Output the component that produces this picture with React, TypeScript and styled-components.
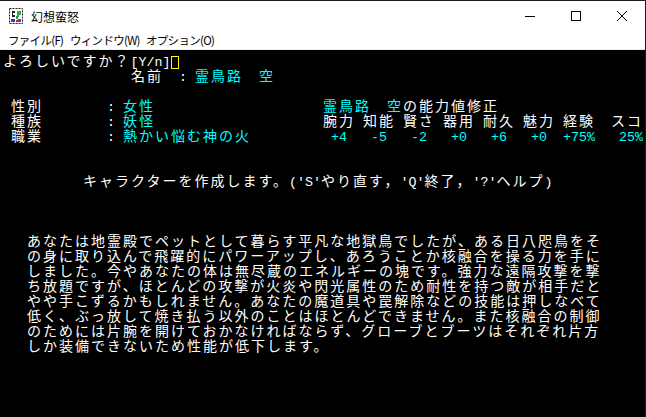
import React from "react";
import styled, { createGlobalStyle } from "styled-components";

const GlobalStyle = createGlobalStyle`
  html, body {
    margin: 0;
    padding: 0;
    background: #000;
  }
  #root {
    width: 646px;
    height: 417px;
  }
`;

const CYAN = "#00ffff";
const WHITE = "#ffffff";

const Window = styled.div`
  width: 646px;
  height: 417px;
  box-sizing: border-box;
  border-top: 1px solid #1b1b1b;
  border-right: 1px solid #1b1b1b;
  background: #fff;
  display: flex;
  flex-direction: column;
  overflow: hidden;
`;

const TitleBar = styled.div`
  height: 30px;
  flex-shrink: 0;
  display: flex;
  align-items: center;
`;

const AppIcon = styled.svg`
  width: 16px;
  height: 16px;
  margin: 0 7px 0 8px;
  flex-shrink: 0;
`;

const Title = styled.span`
  flex: 1;
  font-family: "Noto Sans CJK JP", sans-serif;
  font-size: 12px;
  color: #000;
`;

const CaptionButton = styled.div`
  width: 46px;
  height: 30px;
  display: flex;
  align-items: center;
  justify-content: center;
`;

const MenuBar = styled.div`
  height: 18px;
  flex-shrink: 0;
  display: flex;
  align-items: center;
  padding-left: 8px;
  border-bottom: 1px solid #ececec;
`;

const MenuItem = styled.span<{ $w?: number }>`
  width: ${(p) => (p.$w ? `${p.$w}px` : "auto")};
  font-family: "Noto Sans CJK JP", sans-serif;
  font-size: 11.5px;
  letter-spacing: -0.7px;
  color: #000;
  white-space: nowrap;
`;

const Terminal = styled.div`
  flex: 1;
  background: #000;
  padding: 3px 0 0 3px;
  overflow: hidden;
`;

const Row = styled.div`
  height: 15px;
  line-height: 15px;
  white-space: pre;
`;

const Wide = styled.span<{ $c: string }>`
  font-family: "Noto Sans CJK JP", sans-serif;
  font-size: 14px;
  letter-spacing: 2px;
  color: ${(p) => p.$c};
`;

const Half = styled.span<{ $c: string }>`
  font-family: "Liberation Mono", monospace;
  font-size: 13.3333px;
  letter-spacing: 0;
  color: ${(p) => p.$c};
`;

const Cursor = styled.span`
  display: inline-block;
  width: 8px;
  height: 13px;
  box-sizing: border-box;
  border: 1px solid #ffff00;
  vertical-align: -3px;
`;

type Seg = [string, string?];

// split a string into half-width (ascii) and full-width runs
function runs(text: string) {
  const out: { t: string; half: boolean }[] = [];
  for (const ch of text) {
    const half = ch.charCodeAt(0) < 0x100;
    const last = out[out.length - 1];
    if (last && last.half === half) last.t += ch;
    else out.push({ t: ch, half });
  }
  return out;
}

function Line({ segs, cursor }: { segs: Seg[]; cursor?: boolean }) {
  return (
    <Row>
      {segs.map(([text, color = WHITE], i) =>
        runs(text).map((r, j) =>
          r.half ? (
            <Half key={`${i}-${j}`} $c={color}>
              {r.t}
            </Half>
          ) : (
            <Wide key={`${i}-${j}`} $c={color}>
              {r.t}
            </Wide>
          )
        )
      )}
      {cursor && <Cursor />}
    </Row>
  );
}

const pad = (n: number) => " ".repeat(n);

const story = [
  "あなたは地霊殿でペットとして暮らす平凡な地獄鳥でしたが、ある日八咫鳥をそ",
  "の身に取り込んで飛躍的にパワーアップし、あろうことか核融合を操る力を手に",
  "しました。今やあなたの体は無尽蔵のエネルギーの塊です。強力な遠隔攻撃を撃",
  "ち放題ですが、ほとんどの攻撃が火炎や閃光属性のため耐性を持つ敵が相手だと",
  "やや手こずるかもしれません。あなたの魔道具や罠解除などの技能は押しなべて",
  "低く、ぶっ放して焼き払う以外のことはほとんどできません。また核融合の制御",
  "のためには片腕を開けておかなければならず、グローブとブーツはそれぞれ片方",
  "しか装備できないため性能が低下します。",
];

// label column: space, 2 wide chars, 8 spaces, colon, space
const label = (s: string) => " " + s + pad(8) + ": ";

const rows: Seg[][] = [
  [],
  [[pad(16) + "名前  : "], ["霊鳥路　空", CYAN]],
  [],
  [[label("性別")], ["女性", CYAN], [pad(21)], ["霊鳥路　空", CYAN], ["の能力値修正"]],
  [[label("種族")], ["妖怪", CYAN], [pad(21) + "腕力 知能 賢さ 器用 耐久 魅力 経験  スコ"]],
  [
    [label("職業")],
    ["熱かい悩む神の火", CYAN],
    [pad(9)],
    [" +4   -5   -2   +0   +6   +0  +75%   25%", CYAN],
  ],
  [],
  [],
  [[pad(10) + "キャラクターを作成します。('S'やり直す，'Q'終了，'?'ヘルプ)"]],
  [],
  [],
  [],
  ...story.map((s): Seg[] => [[pad(3) + s]]),
];

function TitleIcon() {
  return (
    <AppIcon viewBox="0 0 16 16">
      <rect x="1.5" y="0.5" width="13" height="15" fill="#fff" stroke="#222" strokeDasharray="2 1" />
      <path d="M4 3h3v2H5v2h2v2H4z" fill="#222" />
      <path d="M9 3h4v4h-2v2h-2z" fill="#2fa84f" />
      <path d="M8 8h2v3H8z" fill="#1f9d3a" />
      <path d="M3 11h4v3H3z" fill="#2b3fd0" />
      <path d="M10 11h3v3h-3z" fill="#5a3bb0" />
      <rect x="8" y="12" width="2" height="2" fill="#e02020" />
    </AppIcon>
  );
}

export default function App() {
  return (
    <>
      <GlobalStyle />
      <Window>
        <TitleBar>
          <TitleIcon />
          <Title>幻想蛮怒</Title>
          <CaptionButton>
            <svg width="10" height="10" viewBox="0 0 10 10">
              <path d="M0 5.5h10" stroke="#000" strokeWidth="1" />
            </svg>
          </CaptionButton>
          <CaptionButton>
            <svg width="10" height="10" viewBox="0 0 10 10">
              <rect x="0.5" y="0.5" width="9" height="9" fill="none" stroke="#000" />
            </svg>
          </CaptionButton>
          <CaptionButton>
            <svg width="10" height="10" viewBox="0 0 10 10">
              <path d="M0 0L10 10M10 0L0 10" stroke="#000" strokeWidth="1" />
            </svg>
          </CaptionButton>
        </TitleBar>
        <MenuBar>
          <MenuItem $w={62}>ファイル(F)</MenuItem>
          <MenuItem $w={76}>ウィンドウ(W)</MenuItem>
          <MenuItem>オプション(O)</MenuItem>
        </MenuBar>
        <Terminal>
          <Line segs={[["よろしいですか？[Y/n]"]]} cursor />
          {rows.slice(1).map((segs, i) => (
            <Line key={i} segs={segs} />
          ))}
        </Terminal>
      </Window>
    </>
  );
}
